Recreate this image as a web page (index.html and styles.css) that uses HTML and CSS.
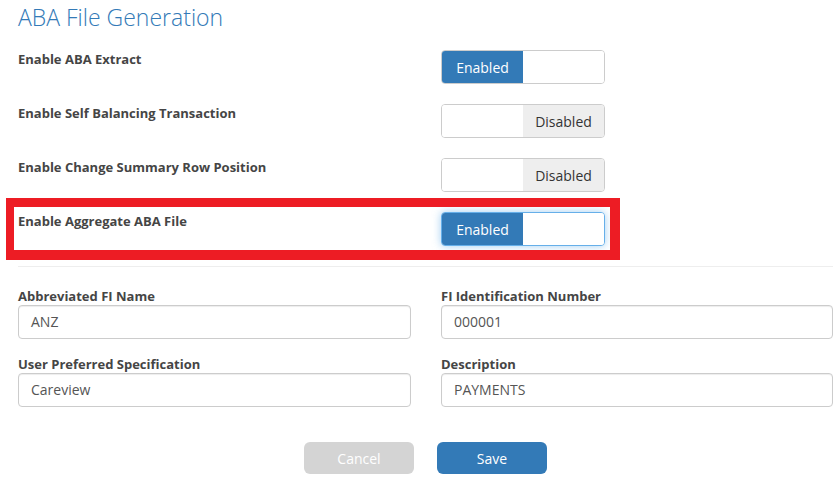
FILE: index.html
```html
<!DOCTYPE html>
<html>
<head>
<meta charset="utf-8">
<link rel="stylesheet" href="styles.css">
</head>
<body>
<div class="page">
  <h1 class="title">ABA File Generation</h1>
  <div class="toggle-row">
    <div class="toggle-label">Enable ABA Extract</div>
    <div class="toggle-cell">
      <div class="toggle on"><span class="half half-on">Enabled</span><span class="half half-blank"></span></div>
    </div>
  </div>
  <div class="toggle-row">
    <div class="toggle-label">Enable Self Balancing Transaction</div>
    <div class="toggle-cell">
      <div class="toggle off"><span class="half half-blank"></span><span class="half half-off">Disabled</span></div>
    </div>
  </div>
  <div class="toggle-row">
    <div class="toggle-label">Enable Change Summary Row Position</div>
    <div class="toggle-cell">
      <div class="toggle off"><span class="half half-blank"></span><span class="half half-off">Disabled</span></div>
    </div>
  </div>
  <div class="toggle-row highlighted">
    <div class="toggle-label">Enable Aggregate ABA File</div>
    <div class="toggle-cell">
      <div class="toggle on focused"><span class="half half-on">Enabled</span><span class="half half-blank"></span></div>
    </div>
  </div>
  <hr class="divider">
  <div class="fields">
    <div class="field">
      <label class="field-label">Abbreviated FI Name</label>
      <div class="input">ANZ</div>
    </div>
    <div class="field">
      <label class="field-label">FI Identification Number</label>
      <div class="input">000001</div>
    </div>
    <div class="field">
      <label class="field-label">User Preferred Specification</label>
      <div class="input">Careview</div>
    </div>
    <div class="field">
      <label class="field-label">Description</label>
      <div class="input">PAYMENTS</div>
    </div>
  </div>
  <div class="actions">
    <button class="btn btn-cancel">Cancel</button>
    <button class="btn btn-save">Save</button>
  </div>
</div>
</body>
</html>
```
FILE: styles.css
```css
*, *::before, *::after { box-sizing: border-box; }
html, body { margin: 0; padding: 0; background: #fff; }
body { font-family: "Open Sans", "Noto Sans", sans-serif; color: #444; }
.page {
  width: 815px;
  margin-left: 18px;
  padding-top: 2px;
}
.title {
  margin: 0 0 18px 0;
  font-size: 23px;
  line-height: 30px;
  font-weight: 300;
  color: #337ab7;
}
.toggle-row {
  display: grid;
  grid-template-columns: 393px 392px;
  column-gap: 30px;
  margin-bottom: 20px;
}
.toggle-label {
  font-size: 13px;
  font-weight: 700;
  line-height: 18.57px;
  color: #454545;
}
.toggle {
  display: flex;
  width: 164px;
  height: 34px;
  border: 1px solid #ccc;
  border-radius: 4px;
  overflow: hidden;
  background: #fff;
}
.toggle.focused {
  border-color: #66afe9;
  box-shadow: inset 0 1px 1px rgba(0,0,0,.075), 0 0 8px rgba(102,175,233,.6);
}
.half {
  width: 81px;
  display: flex;
  align-items: center;
  justify-content: center;
  font-size: 14px;
  line-height: 20px;
  padding-top: 2px;
}
.half-on { background: #337ab7; color: #fff; }
.half-off { background: #eee; color: #333; }
.half-blank { background: #fff; }
.highlighted { position: relative; }
.highlighted::before {
  content: "";
  position: absolute;
  left: -12px;
  top: -14px;
  width: 614px;
  height: 62px;
  border-style: solid;
  border-color: #ed1c24;
  border-width: 9px 10px 10px 8px;
  pointer-events: none;
}
.divider {
  margin: 0 0 21px 0;
  border: 0;
  border-top: 1px solid #eee;
  height: 0;
}
.fields {
  display: grid;
  grid-template-columns: 393px 392px;
  column-gap: 30px;
  row-gap: 17px;
}
.field { display: flex; flex-direction: column; }
.field-label {
  font-size: 13px;
  font-weight: 700;
  line-height: 16px;
  margin-bottom: 1px;
  color: #454545;
}
.input {
  height: 34px;
  border: 1px solid #ccc;
  border-radius: 4px;
  padding: 6px 12px;
  font-size: 14px;
  line-height: 20px;
  color: #555;
  box-shadow: inset 0 1px 1px rgba(0,0,0,.075);
}
.actions {
  display: flex;
  justify-content: center;
  gap: 23px;
  margin-top: 35px;
}
.btn {
  width: 110px;
  height: 32px;
  border: 0;
  border-radius: 6px;
  font-family: "Open Sans", "Noto Sans", sans-serif;
  font-size: 14px;
  color: #fff;
  padding: 0;
}
.btn-cancel { background: #d4d4d4; }
.btn-save { background: #337ab7; }
```
